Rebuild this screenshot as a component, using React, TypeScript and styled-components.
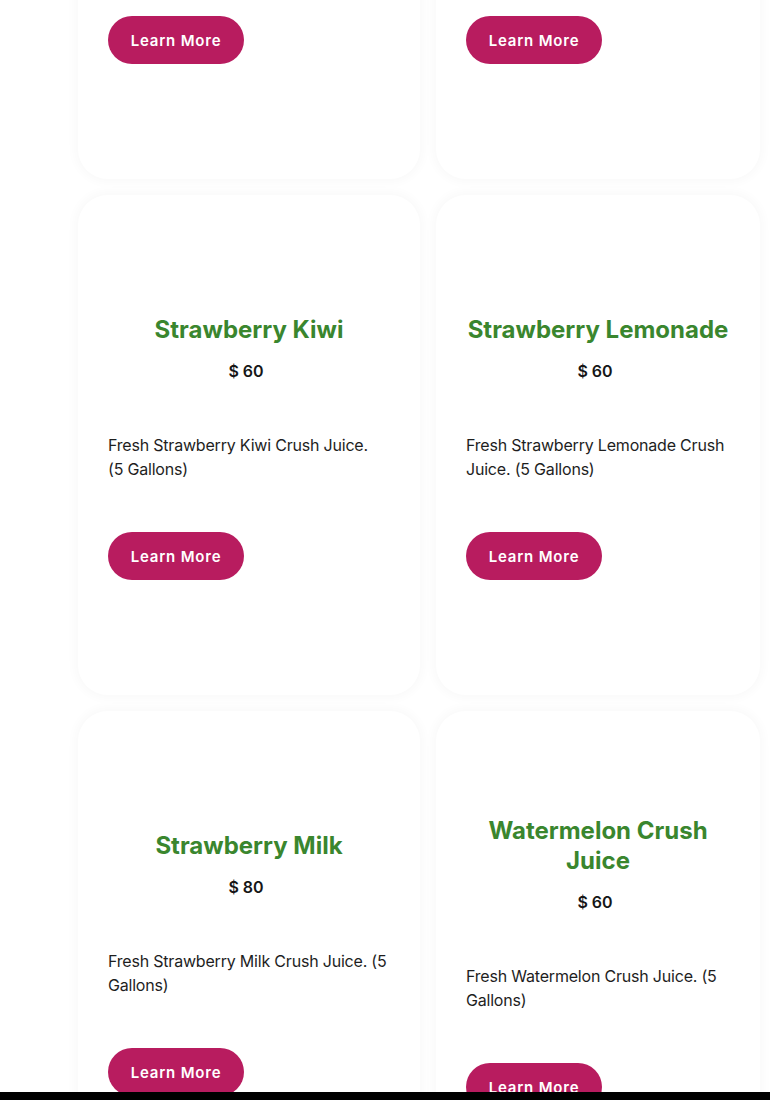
import styled, { createGlobalStyle } from "styled-components";

const GlobalStyle = createGlobalStyle`
  body {
    margin: 0;
    background: #ffffff;
    font-family: Inter, "Noto Sans", Arial, sans-serif;
    overflow: hidden;
  }
`;

const ProductSection = styled.section`
  display: grid;
  grid-template-columns: 342px 324px;
  gap: 16px;
  padding-left: 78px;
  margin-top: -321px;
`;

const ProductCard = styled.div`
  height: 500px;
  box-sizing: border-box;
  padding: 5px 30px 0;
  background: #ffffff;
  border-radius: 30px;
  box-shadow: 0 0 10px 4px rgba(0, 0, 0, 0.025);
  display: flex;
  flex-direction: column;
  justify-content: center;
`;

const ProductTitle = styled.h3`
  margin: 0;
  font-size: 24px;
  line-height: 30px;
  font-weight: 700;
  color: #3a862e;
  text-align: center;
`;

const Price = styled.div`
  margin-top: 14px;
  padding-right: 6px;
  font-size: 16px;
  line-height: 24px;
  font-weight: 600;
  color: #161616;
  text-align: center;
`;

const Description = styled.p`
  margin: 50px 0 0;
  font-size: 16px;
  line-height: 24px;
  letter-spacing: -0.2px;
  color: #1e1e1e;
`;

const LearnButton = styled.button`
  margin-top: 51px;
  align-self: flex-start;
  width: 136px;
  height: 48px;
  border: none;
  border-radius: 24px;
  background: #b81c5f;
  color: #ffffff;
  font-family: inherit;
  font-size: 15px;
  font-weight: 600;
  letter-spacing: 0.8px;
  cursor: pointer;
`;

const BottomBar = styled.div`
  position: fixed;
  left: 0;
  right: 0;
  bottom: 0;
  height: 8px;
  background: #000000;
`;

const products = [
  { name: "Strawberry Crush", price: 60, text: "Fresh Strawberry Crush Juice. (5 Gallons)" },
  { name: "Strawberry Banana", price: 60, text: "Fresh Strawberry Banana Crush Juice. (5 Gallons)" },
  { name: "Strawberry Kiwi", price: 60, text: "Fresh Strawberry Kiwi Crush Juice. (5\u00a0Gallons)" },
  { name: "Strawberry Lemonade", price: 60, text: "Fresh Strawberry Lemonade Crush Juice. (5 Gallons)" },
  { name: "Strawberry Milk", price: 80, text: "Fresh Strawberry Milk Crush Juice. (5 Gallons)" },
  { name: "Watermelon Crush Juice", price: 60, text: "Fresh Watermelon Crush Juice. (5 Gallons)" },
];

const App = () => {
  return (
    <>
      <GlobalStyle />
      <ProductSection>
        {products.map((p) => (
          <ProductCard key={p.name}>
            <ProductTitle>{p.name}</ProductTitle>
            <Price>$ {p.price}</Price>
            <Description>{p.text}</Description>
            <LearnButton>Learn More</LearnButton>
          </ProductCard>
        ))}
      </ProductSection>
      <BottomBar />
    </>
  );
};

export default App;
